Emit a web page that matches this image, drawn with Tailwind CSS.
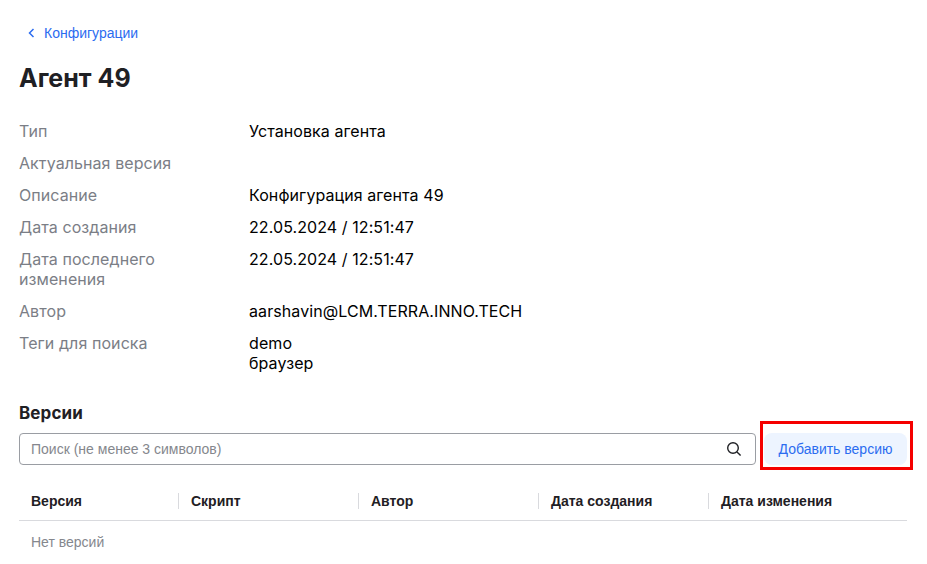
<!DOCTYPE html>
<html lang="ru">
<head>
    <meta charset="UTF-8">
    <title>Агент 49</title>
    <script src="https://cdn.jsdelivr.net/npm/@tailwindcss/browser@4"></script>
</head>
<body class="bg-white font-['Inter',sans-serif] text-[#1f2024] overflow-hidden">
    <div class="relative w-[927px] h-[564px] pl-[19px] pr-[20px] pt-[23px]">
        <!-- Back link -->
        <a class="flex items-center h-[20px] pl-[7px] font-['Liberation_Sans',sans-serif] text-[14px] text-[#2b6cf0]">
            <svg class="w-[12px] h-[12px] mr-[6px]" viewBox="0 0 12 12" fill="none" stroke="currentColor" stroke-width="1.5"><path d="M7.5 2 3.5 6l4 4"/></svg>
            Конфигурации
        </a>
        <h1 class="mt-[15px] text-[25px] leading-[40px] font-bold">Агент 49</h1>

        <!-- Properties -->
        <div class="mt-[23px] grid grid-cols-[230px_1fr] gap-y-[12px] text-[16px] leading-[20px] tracking-[0.08px]">
            <div class="text-[#7b7e86]">Тип</div><div class="text-black">Установка агента</div>
            <div class="text-[#7b7e86]">Актуальная версия</div><div></div>
            <div class="text-[#7b7e86]">Описание</div><div class="text-black">Конфигурация агента 49</div>
            <div class="text-[#7b7e86]">Дата создания</div><div class="text-black">22.05.2024 / 12:51:47</div>
            <div class="text-[#7b7e86] w-[170px]">Дата последнего изменения</div><div class="text-black">22.05.2024 / 12:51:47</div>
            <div class="text-[#7b7e86]">Автор</div><div class="text-black">aarshavin@LCM.TERRA.INNO.TECH</div>
            <div class="text-[#7b7e86]">Теги для поиска</div><div class="text-black">demo<br>браузер</div>
        </div>

        <!-- Versions -->
        <h2 class="mt-[28px] text-[17px] leading-[24px] font-bold tracking-[0.1px]">Версии</h2>
        <div class="mt-[8px] flex gap-[8px]">
            <div class="flex-1 h-[32px] flex items-center justify-between pl-[11px] pr-[12px] border border-[#9a9da3] rounded-[4px]">
                <span class="font-['Liberation_Sans',sans-serif] text-[14px] text-[#85878d]">Поиск (не менее 3 символов)</span>
                <svg class="w-[16px] h-[16px]" viewBox="0 0 16 16" fill="none" stroke="#1f2024" stroke-width="1.4"><circle cx="6" cy="7" r="5.3"/><path d="m10 11 3.6 3.6"/></svg>
            </div>
            <button class="w-[143px] h-[32px] rounded-[8px] bg-[#edf4ff] font-['Liberation_Sans',sans-serif] text-[14px] text-[#2b6cf0]">Добавить версию</button>
        </div>

        <!-- Table -->
        <div class="mt-[28px] flex h-[28px] items-start border-b border-[#d9dade] font-['Liberation_Sans',sans-serif] text-[14px] leading-[16px] font-bold">
            <div class="w-[159px] pl-[12px]">Версия</div>
            <div class="w-[180px] pl-[12px] border-l border-[#d9dade]">Скрипт</div>
            <div class="w-[180px] pl-[12px] border-l border-[#d9dade]">Автор</div>
            <div class="w-[170px] pl-[12px] border-l border-[#d9dade]">Дата создания</div>
            <div class="flex-1 pl-[12px] border-l border-[#d9dade]">Дата изменения</div>
        </div>
        <div class="pl-[12px] pt-[11px] font-['Liberation_Sans',sans-serif] text-[14px] leading-[20px] text-[#85878d]">Нет версий</div>

        <!-- Highlight box over the button -->
        <div class="absolute left-[760px] top-[421px] w-[153px] h-[49px] border-[3px] border-[#f50000]"></div>
    </div>
</body>
</html>
